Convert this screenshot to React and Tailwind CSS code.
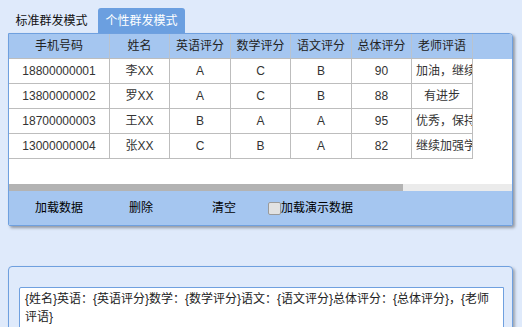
const font = { fontFamily: '"Liberation Sans", "Noto Sans CJK SC", sans-serif' };

const cols = [
  { key: 'phone', title: '手机号码', w: 'w-[101px]' },
  { key: 'name', title: '姓名', w: 'w-[60px]' },
  { key: 'en', title: '英语评分', w: 'w-[61px]' },
  { key: 'math', title: '数学评分', w: 'w-[60px]' },
  { key: 'cn', title: '语文评分', w: 'w-[61px]' },
  { key: 'total', title: '总体评分', w: 'w-[60px]' },
  { key: 'comment', title: '老师评语', w: 'w-[61px]' },
];

const rows = [
  { phone: '18800000001', name: '李XX', en: 'A', math: 'C', cn: 'B', total: '90', comment: '加油，继续努力' },
  { phone: '13800000002', name: '罗XX', en: 'A', math: 'C', cn: 'B', total: '88', comment: '有进步' },
  { phone: '18700000003', name: '王XX', en: 'B', math: 'A', cn: 'A', total: '95', comment: '优秀，保持' },
  { phone: '13000000004', name: '张XX', en: 'C', math: 'B', cn: 'A', total: '82', comment: '继续加强学习' },
];

export default function App() {
  return (
    <div className="w-[522px] h-[327px] overflow-hidden bg-[#dfeafb] text-[12px]" style={font}>
      {/* tabs */}
      <div className="flex pl-[8px] pt-[8px] gap-[3px]">
        <div className="w-[87px] h-[25px] flex items-center justify-center text-[#111]">标准群发模式</div>
        <div className="w-[87px] h-[25px] flex items-center justify-center bg-[#6b9fe0] text-white rounded-t-[3px]">
          个性群发模式
        </div>
      </div>

      {/* grid panel */}
      <div className="ml-[8px] w-[505px] border border-[#6fa0df] rounded-tr-[4px] rounded-b-[2px] bg-white shadow-[2px_2px_3px_rgba(0,0,0,0.35)] overflow-hidden">
        <div className="bg-[#a5c6f0]">
          <div className="flex w-[464px] h-[25px] border-b border-[#bdbdbd]">
            {cols.map((c) => (
              <div key={c.key} className={`${c.w} shrink-0 border-r border-[#b9c3cf] flex items-center justify-center text-[12px] text-[#222]`}>
                {c.title}
              </div>
            ))}
          </div>
        </div>
        {rows.map((r) => (
          <div key={r.phone} className="flex w-[464px] h-[25px] border-b border-[#bdbdbd]">
            {cols.map((c) => (
              <div
                key={c.key}
                className={`${c.w} shrink-0 border-r border-[#bdbdbd] px-[4px] leading-[24px] text-center whitespace-nowrap overflow-hidden text-[#333]`}
              >
                {r[c.key]}
              </div>
            ))}
          </div>
        ))}
        <div className="h-[25px]" />
        {/* horizontal scrollbar */}
        <div className="h-[7px] bg-[#ebebeb]">
          <div className="h-full w-[394px] bg-[#b3b3b3]" />
        </div>
        {/* toolbar */}
        <div className="h-[34px] bg-[#a5c6f0] flex items-center text-[#000]">
          <button className="ml-[26px]">加载数据</button>
          <button className="ml-[46px]">删除</button>
          <button className="ml-[59px]">清空</button>
          <label className="ml-[32px] flex items-center">
            <span className="w-[13px] h-[13px] rounded-[2px] border border-[#9a9a9a] bg-[#e2e2e2]" />
            <span>加载演示数据</span>
          </label>
        </div>
      </div>

      {/* template panel */}
      <div className="ml-[8px] mt-[40px] w-[505px] h-[80px] border border-[#6fa0df] rounded-[4px] bg-[#dfeafb] shadow-[2px_2px_3px_rgba(0,0,0,0.3)]">
        <div className="ml-[10px] mt-[20px] w-[485px] h-[60px] bg-white border border-[#6fa0df] rounded-tl-[2px] px-[5px] pt-[2px] leading-[18px] text-[#222]">
          {'{姓名}英语：{英语评分}数学：{数学评分}语文：{语文评分}总体评分：{总体评分}，{老师评语}'}
        </div>
      </div>
    </div>
  );
}
